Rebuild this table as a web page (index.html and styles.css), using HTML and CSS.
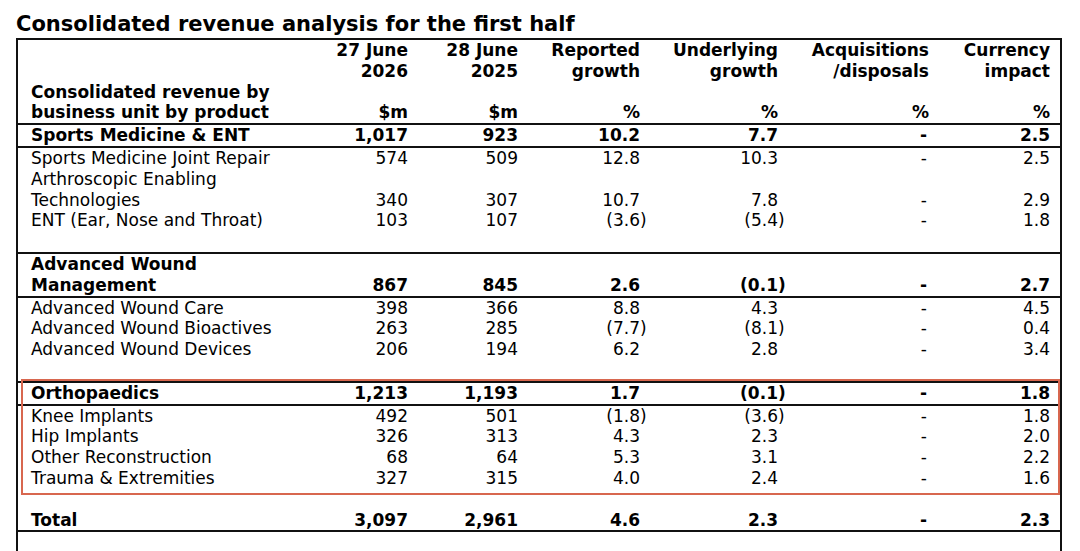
FILE: index.html
```html
<!DOCTYPE html>
<html lang="en">
<head>
<meta charset="utf-8">
<title>Consolidated revenue analysis for the first half</title>
<link rel="stylesheet" href="styles.css">
</head>
<body>
<div class="page">
  <h1 class="title">Consolidated revenue analysis for the first half</h1>
  <div class="table-wrap">
    <table class="rev">
      <colgroup>
        <col class="c-label"><col class="c-m1"><col class="c-m2"><col class="c-rep"><col class="c-und"><col class="c-acq"><col class="c-cur">
      </colgroup>
      <thead>
        <tr class="hd1">
          <th></th>
          <th>27 June<br>2026</th>
          <th>28 June<br>2025</th>
          <th>Reported<br>growth</th>
          <th>Underlying<br>growth</th>
          <th>Acquisitions<br>/disposals</th>
          <th class="cur">Currency<br>impact</th>
        </tr>
        <tr class="hd2">
          <th class="lbl">Consolidated revenue by<br>business unit by product</th>
          <th>$m</th>
          <th>$m</th>
          <th>%</th>
          <th>%</th>
          <th>%</th>
          <th class="cur">%</th>
        </tr>
      </thead>
      <tbody>
        <tr class="sec-head">
          <td class="lbl">Sports Medicine &amp; ENT</td>
          <td>1,017</td><td>923</td><td>10.2</td><td>7.7</td><td class="dash">-</td><td class="cur">2.5</td>
        </tr>
        <tr>
          <td class="lbl">Sports Medicine Joint Repair</td>
          <td>574</td><td>509</td><td>12.8</td><td>10.3</td><td class="dash">-</td><td class="cur">2.5</td>
        </tr>
        <tr>
          <td class="lbl">Arthroscopic Enabling<br>Technologies</td>
          <td>340</td><td>307</td><td>10.7</td><td>7.8</td><td class="dash">-</td><td class="cur">2.9</td>
        </tr>
        <tr>
          <td class="lbl">ENT (Ear, Nose and Throat)</td>
          <td>103</td><td>107</td><td>(3.6<span class="cp">)</span></td><td>(5.4<span class="cp">)</span></td><td class="dash">-</td><td class="cur">1.8</td>
        </tr>
        <tr class="sec-end"><td colspan="7">&nbsp;</td></tr>

        <tr class="sec-head">
          <td class="lbl">Advanced Wound<br>Management</td>
          <td>867</td><td>845</td><td>2.6</td><td>(0.1<span class="cp">)</span></td><td class="dash">-</td><td class="cur">2.7</td>
        </tr>
        <tr>
          <td class="lbl">Advanced Wound Care</td>
          <td>398</td><td>366</td><td>8.8</td><td>4.3</td><td class="dash">-</td><td class="cur">4.5</td>
        </tr>
        <tr>
          <td class="lbl">Advanced Wound Bioactives</td>
          <td>263</td><td>285</td><td>(7.7<span class="cp">)</span></td><td>(8.1<span class="cp">)</span></td><td class="dash">-</td><td class="cur">0.4</td>
        </tr>
        <tr>
          <td class="lbl">Advanced Wound Devices</td>
          <td>206</td><td>194</td><td>6.2</td><td>2.8</td><td class="dash">-</td><td class="cur">3.4</td>
        </tr>
        <tr class="sec-end"><td colspan="7">&nbsp;</td></tr>

        <tr class="sec-head">
          <td class="lbl">Orthopaedics</td>
          <td>1,213</td><td>1,193</td><td>1.7</td><td>(0.1<span class="cp">)</span></td><td class="dash">-</td><td class="cur">1.8</td>
        </tr>
        <tr>
          <td class="lbl">Knee Implants</td>
          <td>492</td><td>501</td><td>(1.8<span class="cp">)</span></td><td>(3.6<span class="cp">)</span></td><td class="dash">-</td><td class="cur">1.8</td>
        </tr>
        <tr>
          <td class="lbl">Hip Implants</td>
          <td>326</td><td>313</td><td>4.3</td><td>2.3</td><td class="dash">-</td><td class="cur">2.0</td>
        </tr>
        <tr>
          <td class="lbl">Other Reconstruction</td>
          <td>68</td><td>64</td><td>5.3</td><td>3.1</td><td class="dash">-</td><td class="cur">2.2</td>
        </tr>
        <tr>
          <td class="lbl">Trauma &amp; Extremities</td>
          <td>327</td><td>315</td><td>4.0</td><td>2.4</td><td class="dash">-</td><td class="cur">1.6</td>
        </tr>
        <tr class="gap"><td colspan="7">&nbsp;</td></tr>

        <tr class="total">
          <td class="lbl">Total</td>
          <td>3,097</td><td>2,961</td><td>4.6</td><td>2.3</td><td class="dash">-</td><td class="cur">2.3</td>
        </tr>
        <tr class="tail"><td colspan="7">&nbsp;</td></tr>
      </tbody>
    </table>
    <div class="highlight"></div>
  </div>
</div>
</body>
</html>
```

FILE: styles.css
```css
html, body {
  margin: 0;
  padding: 0;
  overflow: hidden;
  background: #ffffff;
}

body {
  font-family: "DejaVu Sans", Verdana, sans-serif;
  color: #000000;
}

.page {
  padding-left: 16px;
  width: 1046px;
}

.title {
  margin: 0 0 1px 0;
  padding-top: 12px;
  font-size: 21px;
  line-height: 25px;
  font-weight: bold;
  white-space: nowrap;
}

.table-wrap {
  position: relative;
}

.rev {
  width: 1046px;
  table-layout: fixed;
  border-collapse: separate;
  border-spacing: 0;
  border: 2px solid #111111;
  border-bottom: none;
  font-size: 17px;
  line-height: 20.8px;
}

.c-label { width: 292px; }
.c-m1 { width: 98px; }
.c-m2 { width: 110px; }
.c-rep { width: 122px; }
.c-und { width: 138px; }
.c-acq { width: 151px; }
.c-cur { width: 131px; }

.rev th,
.rev td {
  padding: 0;
  text-align: right;
  vertical-align: bottom;
  white-space: nowrap;
  font-weight: normal;
}

.rev th {
  font-weight: bold;
}

.rev .lbl {
  text-align: left;
  padding-left: 13px;
}

.rev .cur {
  padding-right: 10px;
}

.rev .dash {
  padding-right: 2px;
}

.hd2 th {
  border-bottom: 2px solid #111111;
}

.sec-head td {
  font-weight: bold;
  border-bottom: 2px solid #111111;
}

.sec-end td {
  border-bottom: 2px solid #111111;
}

.total td {
  font-weight: bold;
  border-bottom: 2px solid #111111;
}

.tail td {
  height: 30px;
}

.cp {
  margin-right: -0.39em;
}

.sec-head .cp {
  margin-right: -0.457em;
}

.highlight {
  position: absolute;
  left: 5px;
  top: 341px;
  width: 1039px;
  height: 116px;
  box-sizing: border-box;
  border: 2px solid #d8674f;
  pointer-events: none;
}
```
